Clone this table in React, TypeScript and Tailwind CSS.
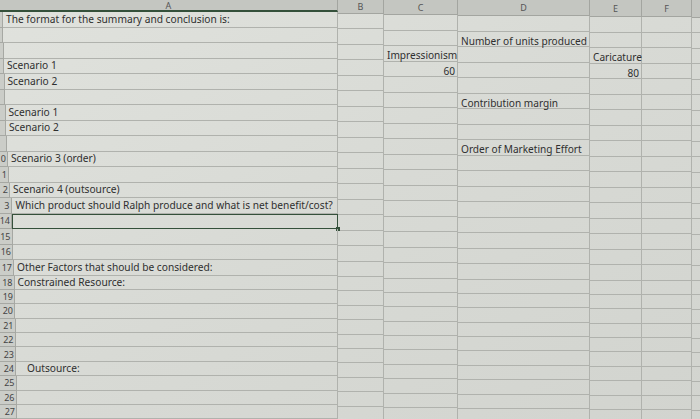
type Row = {
  a?: string;
  aPad?: string;
  c?: string;
  d?: string;
  e?: string;
  cRight?: boolean;
  eRight?: boolean;
  selected?: boolean;
};

// content of the sheet, keyed by row number
const content: Record<number, Row> = {
  1: { a: "The format for the summary and conclusion is:" },
  2: { d: "Number of units produced" },
  3: { c: "Impressionism", e: "Caricature" },
  4: { a: "Scenario 1", c: "60", e: "80", cRight: true, eRight: true },
  5: { a: "Scenario 2" },
  6: { d: "Contribution margin" },
  7: { a: "Scenario 1" },
  8: { a: "Scenario 2" },
  9: { d: "Order of Marketing Effort" },
  10: { a: "Scenario 3 (order)" },
  12: { a: "Scenario 4 (outsource)" },
  13: { a: "Which product should Ralph produce and what is net benefit/cost?", aPad: "pl-[4px]" },
  14: { selected: true },
  17: { a: "Other Factors that should be considered:" },
  18: { a: "Constrained Resource:" },
  24: { a: "Outsource:", aPad: "pl-[11px]" },
};

// the row heading column is cut off by the photo edge, widening downwards
const headWidths = [
  3, 3, 3.5, 4, 4.5, 5, 5.5, 6, 6.5, 8, 9, 10, 11.5, 12, 12.5, 13, 14, 14.5, 15, 15, 15.5, 15.5, 16,
  16, 16.5, 16.5, 17,
];

// what is left visible of each row number at the photo edge
const headLabel = (n: number) => (n < 10 ? "" : n < 14 ? String(n % 10) : String(n));

const rows = Array.from({ length: 27 }, (_, i) => i + 1);
const rowH = (n: number) => (n <= 17 ? "h-[15.5px]" : "h-[14.4px]");

const font = { fontFamily: '"Noto Sans", "Open Sans", sans-serif' };
const line = "border-[#b0b2ad]";

function ARow({ n }: { n: number }) {
  const r = content[n] ?? {};
  return (
    <div className={`flex ${rowH(n)} shrink-0`}>
      <div
        className="flex shrink-0 items-center justify-end overflow-hidden border-r border-b border-[#a6a8a3] bg-[#cbcdc8] pr-[1px] text-[9px] leading-none text-[#444]"
        style={{ width: headWidths[n - 1] }}
      >
        {headLabel(n)}
      </div>
      <div
        className={`relative flex min-w-0 flex-1 items-center ${r.aPad ?? "pl-[3px]"} ${
          r.selected ? "border-[1.5px] border-[#34503a]" : `border-r border-b ${line}`
        }`}
      >
        <span className="whitespace-nowrap text-[10.2px] text-[#2f2f2f]">{r.a}</span>
        {r.selected && <span className="absolute -right-[2.5px] -bottom-[2.5px] h-[4px] w-[4px] bg-[#34503a]" />}
      </div>
    </div>
  );
}

type ColProps = {
  label: string;
  width: string;
  head: string;
  field?: "c" | "d" | "e";
  last?: boolean;
};

// columns B..G sit a little lower towards the right of the photo
function Column({ label, width, head, field, last }: ColProps) {
  const edge = last ? "" : "border-r";
  return (
    <div className={`flex ${width} shrink-0 flex-col`}>
      <div
        className={`flex ${head} shrink-0 items-center justify-center ${edge} border-b border-[#a3a5a0] bg-[#c4c6c1] text-[9px] leading-none text-[#555]`}
      >
        {label}
      </div>
      {rows.map((n) => {
        const r = content[n] ?? {};
        const text = field ? r[field] : undefined;
        const right = (field === "c" && r.cRight) || (field === "e" && r.eRight);
        return (
          <div
            key={n}
            className={`flex ${rowH(n)} shrink-0 items-end ${edge} border-b ${line} px-[3px] ${
              right ? "justify-end pr-[2px]" : ""
            }`}
          >
            <span className="whitespace-nowrap text-[10.1px] leading-none text-[#2f2f2f]">{text}</span>
          </div>
        );
      })}
    </div>
  );
}

export default function App() {
  return (
    <div
      className="flex h-[419px] w-[700px] overflow-hidden bg-gradient-to-br from-[#e0e2dd] via-[#d8dad5] to-[#d2d4cf]"
      style={font}
    >
      {/* column A with the row headings */}
      <div className="flex w-[338px] shrink-0 flex-col">
        <div className="flex h-[12px] shrink-0 items-center justify-center border-r border-b-2 border-r-[#a3a5a0] border-b-[#34503a] bg-[#c4c6c1] text-[9px] leading-none text-[#555]">
          A
        </div>
        {rows.map((n) => (
          <ARow key={n} n={n} />
        ))}
      </div>

      <Column label="B" width="w-[46px]" head="h-[13.5px]" />
      <Column label="C" width="w-[74px]" head="h-[15px]" field="c" />
      <Column label="D" width="w-[132px]" head="h-[16px]" field="d" />
      <Column label="E" width="w-[52px]" head="h-[17px]" field="e" />
      <Column label="F" width="w-[50px]" head="h-[17px]" />
      <div className="flex-1">
        <Column label="" width="w-full" head="h-[17.5px]" last />
      </div>
    </div>
  );
}
